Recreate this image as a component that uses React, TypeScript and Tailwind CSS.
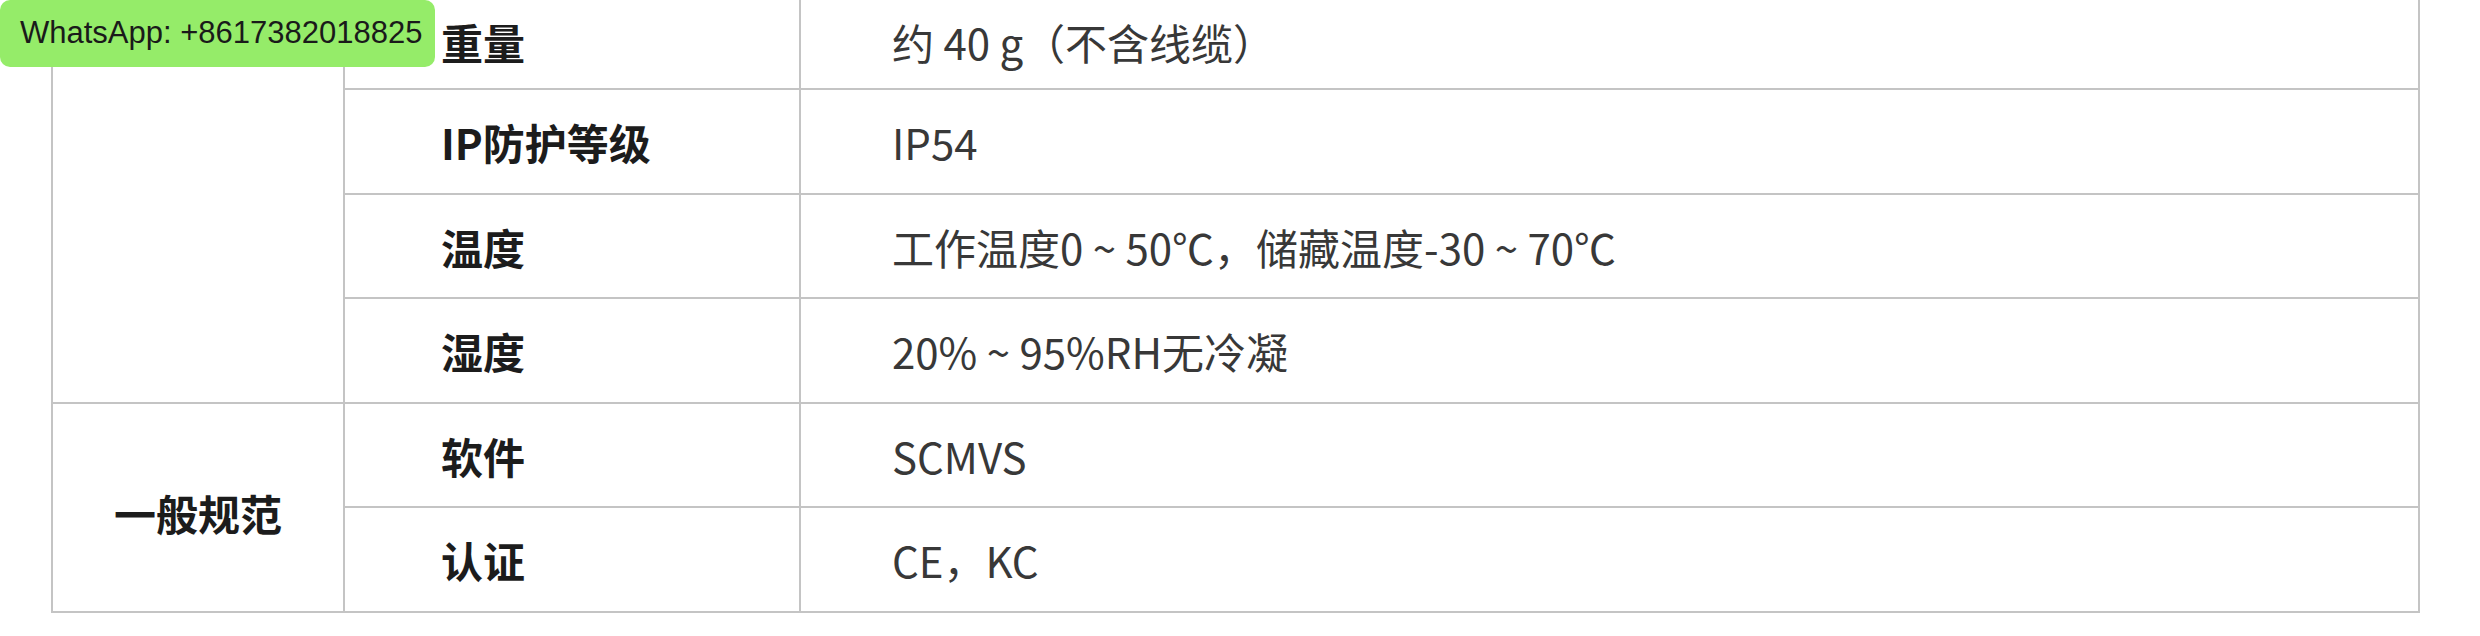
import React from 'react';

interface SpecRow {
  label: string;
  value: string;
  h: string;
  pad?: string;
}

interface SpecGroup {
  name: string;
  rows: SpecRow[];
}

const groups: SpecGroup[] = [
  {
    name: '',
    rows: [
      { label: '重量', value: '约 40 g（不含线缆）', h: 'h-[90px]', pad: 'pb-[6px]' },
      { label: 'IP防护等级', value: 'IP54', h: 'h-[105px]' },
      { label: '温度', value: '工作温度0 ~ 50℃，储藏温度-30 ~ 70℃', h: 'h-[104px]' },
      { label: '湿度', value: '20% ~ 95%RH无冷凝', h: 'h-[105px]' },
    ],
  },
  {
    name: '一般规范',
    rows: [
      { label: '软件', value: 'SCMVS', h: 'h-[104px]' },
      { label: '认证', value: 'CE，KC', h: 'h-[105px]' },
    ],
  },
];

export default function App() {
  return (
    <div className="relative w-[2480px] h-[636px] overflow-hidden bg-white font-['Noto_Sans_CJK_SC','Noto_Sans',sans-serif]">
      {/* spec table */}
      <div className="ml-[51px] w-[2369px] border-x-2 border-[#c4c4c4]">
        {groups.map((g, gi) => (
          <div key={gi} className="flex">
            <div className="w-[292px] shrink-0 flex items-center justify-center border-r-2 border-b-2 border-[#c4c4c4] text-[42px] font-bold text-[#1c1c1c] pt-[10px]">
              {g.name}
            </div>
            <div className="flex-1 flex flex-col">
              {g.rows.map((r, ri) => (
                <div key={ri} className={`flex ${r.h}`}>
                  <div className={`w-[456px] shrink-0 flex items-center pl-[96px] border-r-2 border-b-2 border-[#c4c4c4] text-[42px] font-bold text-[#1c1c1c] ${r.pad ?? ''}`}>
                    {r.label}
                  </div>
                  <div className={`flex-1 flex items-center pl-[91px] border-b-2 border-[#c4c4c4] text-[42px] text-[#383838] whitespace-pre ${r.pad ?? ''}`}>
                    {r.value}
                  </div>
                </div>
              ))}
            </div>
          </div>
        ))}
      </div>

      {/* contact badge */}
      <div className="absolute left-0 top-0 w-[435px] h-[67px] rounded-[10px] bg-[#95ec69] flex items-center pl-[20px] font-['Liberation_Sans',Arial,sans-serif] text-[31px] text-[#1a1a1a]">
        WhatsApp: +8617382018825
      </div>
    </div>
  );
}
